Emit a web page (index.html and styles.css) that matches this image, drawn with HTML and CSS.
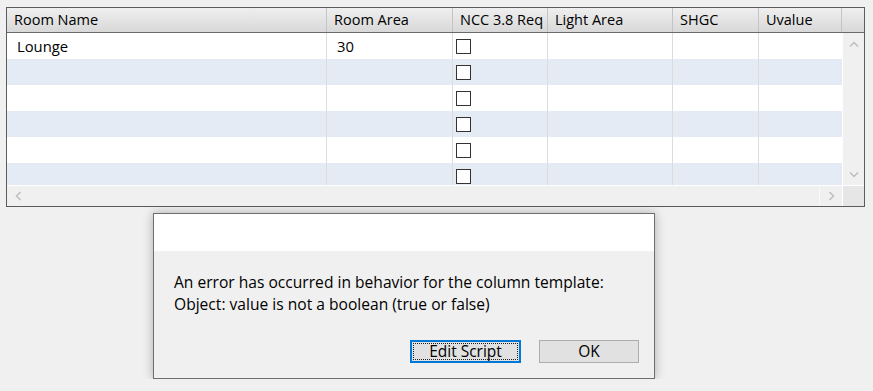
FILE: index.html
```html
<!DOCTYPE html>
<html>
<head>
<meta charset="utf-8">
<link rel="stylesheet" href="styles.css">
</head>
<body>
<div class="grid">
  <div class="head">
    <div class="hc">Room Name</div>
    <div class="hc">Room Area</div>
    <div class="hc">NCC 3.8 Req</div>
    <div class="hc">Light Area</div>
    <div class="hc">SHGC</div>
    <div class="hc">Uvalue</div>
    <div class="hc filler"></div>
  </div>
  <div class="main">
    <div class="rows">
      <div class="row"><div class="c c1">Lounge</div><div class="c c2">30</div><div class="c c3"><span class="cb"></span></div><div class="c c4"></div><div class="c c5"></div><div class="c c6"></div></div>
      <div class="row alt"><div class="c c1"></div><div class="c c2"></div><div class="c c3"><span class="cb"></span></div><div class="c c4"></div><div class="c c5"></div><div class="c c6"></div></div>
      <div class="row"><div class="c c1"></div><div class="c c2"></div><div class="c c3"><span class="cb"></span></div><div class="c c4"></div><div class="c c5"></div><div class="c c6"></div></div>
      <div class="row alt"><div class="c c1"></div><div class="c c2"></div><div class="c c3"><span class="cb"></span></div><div class="c c4"></div><div class="c c5"></div><div class="c c6"></div></div>
      <div class="row"><div class="c c1"></div><div class="c c2"></div><div class="c c3"><span class="cb"></span></div><div class="c c4"></div><div class="c c5"></div><div class="c c6"></div></div>
      <div class="row alt"><div class="c c1"></div><div class="c c2"></div><div class="c c3"><span class="cb"></span></div><div class="c c4"></div><div class="c c5"></div><div class="c c6"></div></div>
    </div>
    <div class="vscroll">
      <div class="sbtn"><svg width="10" height="7" viewBox="0 0 10 7"><path d="M1 5.5 L5 1.5 L9 5.5" fill="none" stroke="#bdbdbd" stroke-width="1.5"/></svg></div>
      <div class="vtrack"></div>
      <div class="sbtn"><svg width="10" height="7" viewBox="0 0 10 7"><path d="M1 1.5 L5 5.5 L9 1.5" fill="none" stroke="#bdbdbd" stroke-width="1.5"/></svg></div>
    </div>
  </div>
  <div class="hbar">
    <div class="hbtn"><svg width="7" height="10" viewBox="0 0 7 10"><path d="M5.5 1 L1.5 5 L5.5 9" fill="none" stroke="#bdbdbd" stroke-width="1.5"/></svg></div>
    <div class="htrack"></div>
    <div class="hbtn"><svg width="7" height="10" viewBox="0 0 7 10"><path d="M1.5 1 L5.5 5 L1.5 9" fill="none" stroke="#bdbdbd" stroke-width="1.5"/></svg></div>
    <div class="corner"></div>
  </div>
</div>

<div class="dialog">
  <div class="dtitle"></div>
  <div class="dbody">
    <p class="msg">An error has occurred in behavior for the column template:<br>Object: value is not a boolean (true or false)</p>
    <div class="buttons">
      <button class="btn focus"><span>Edit Script</span></button>
      <button class="btn ok">OK</button>
    </div>
  </div>
</div>
</body>
</html>
```

FILE: styles.css
```css
html, body {
  margin: 0;
  padding: 0;
  background: #f0f0f0;
  font-family: "Open Sans", "Noto Sans", sans-serif;
  color: #000;
}

.grid {
  margin: 7px 0 0 6px;
  width: 857px;
  height: 198px;
  border: 1px solid #5c5c5c;
  background: #fff;
  display: flex;
  flex-direction: column;
}

.head {
  display: grid;
  grid-template-columns: 320px 126px 95px 125px 86px 83px 22px;
  height: 24px;
  border-bottom: 1px solid #6a6a6a;
  background: linear-gradient(#efefef, #d8d8d8);
}

.hc {
  border-right: 1px solid #c4c4c4;
  font-size: 14.5px;
  line-height: 24px;
  padding-left: 7px;
  white-space: nowrap;
  overflow: hidden;
}

.hc.filler {
  border-right: none;
}

.main {
  display: flex;
  height: 152px;
}

.rows {
  width: 836px;
  overflow: hidden;
}

.row {
  display: grid;
  grid-template-columns: 320px 126px 95px 125px 86px 84px;
  height: 26px;
  background: #fff;
}

.row.alt {
  background: #e4ebf5;
}

.c {
  border-right: 1px solid #dcdcdc;
  font-size: 14.8px;
  line-height: 26px;
  padding-left: 10px;
  white-space: nowrap;
}

.c6 {
  border-right: none;
}

.c3 {
  padding-left: 3px;
  display: flex;
  align-items: center;
}

.cb {
  display: block;
  width: 15px;
  height: 15px;
  border: 1px solid #333;
  background: #fff;
  box-sizing: border-box;
}

.vscroll {
  width: 21px;
  background: #f0f0f0;
  border-left: 1px solid #fff;
  display: flex;
  flex-direction: column;
}

.sbtn {
  height: 22px;
  display: flex;
  align-items: center;
  justify-content: center;
}

.vtrack {
  flex: 1;
}

.hbar {
  height: 20px;
  border-top: 1px solid #fff;
  background: #f0f0f0;
  display: flex;
}

.hbtn {
  width: 22px;
  display: flex;
  align-items: center;
  justify-content: center;
}

.htrack {
  flex: 1;
}

.hbtn:nth-child(3) {
  border-left: 1px solid #fafafa;
}

.corner {
  width: 21px;
  background: #e6e6e6;
  border-left: 1px solid #fff;
}

.dialog {
  margin: 6px 0 0 153px;
  width: 500px;
  height: 164px;
  border: 1px solid #6e6e6e;
  background: #f0f0f0;
  box-shadow: 0 0 10px rgba(0, 0, 0, 0.28);
  display: flex;
  flex-direction: column;
}

.dtitle {
  height: 37px;
  background: #fff;
}

.dbody {
  flex: 1;
  display: flex;
  flex-direction: column;
}

.msg {
  margin: 20px 0 0 20px;
  font-size: 15.6px;
  line-height: 22px;
}

.buttons {
  margin-top: auto;
  margin-bottom: 15px;
  display: flex;
  justify-content: flex-end;
  gap: 18px;
  padding-right: 15px;
}

.btn {
  font-family: "Open Sans", "Noto Sans", sans-serif;
  font-size: 15.5px;
  height: 23px;
  padding: 0;
  background: #e1e1e1;
  border: 1px solid #adadad;
  color: #000;
  line-height: 19px;
}

.btn.focus {
  width: 111px;
  border: 2px solid #0078d7;
  display: flex;
  align-items: stretch;
  justify-content: center;
}

.btn.focus span {
  flex: 1;
  margin: 1px;
  border: 1px dotted #222;
  line-height: 15px;
}

.btn.ok {
  width: 100px;
}
```
